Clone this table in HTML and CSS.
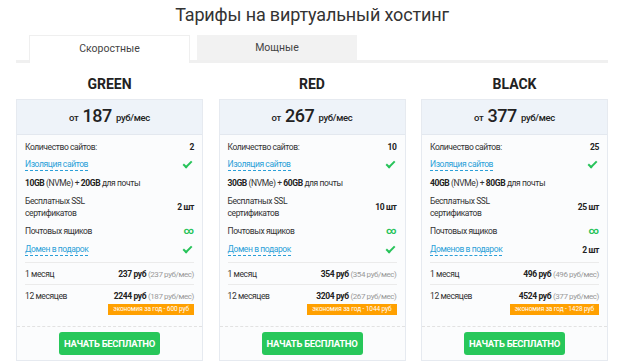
FILE: index.html
```html
<!DOCTYPE html>
<html lang="ru">
<head>
<meta charset="utf-8">
<link rel="stylesheet" href="styles.css">
</head>
<body>
<div class="page">
  <h1 class="title">Тарифы на виртуальный хостинг</h1>
  <div class="tabs">
    <div class="tab active">Скоростные</div>
    <div class="tab">Мощные</div>
  </div>
  <div class="plans">
    <div class="plan">
      <div class="plan-name">GREEN</div>
      <div class="card">
        <div class="card-head">от <span class="big">187</span> руб/мес</div>
        <div class="card-body">
          <div class="row"><span>Количество сайтов:</span><b>2</b></div>
          <div class="row"><span class="link">Изоляция сайтов</span><span class="check"></span></div>
          <div class="row"><span><b>10GB</b> (NVMe) + <b>20GB</b> для почты</span></div>
          <div class="row two"><span>Бесплатных SSL<br>сертификатов</span><b>2 шт</b></div>
          <div class="row"><span>Почтовых ящиков</span><span class="inf">∞</span></div>
          <div class="row gift"><span class="link">Домен в подарок</span><span class="check"></span></div>
          <div class="price-row"><span>1 месяц</span><span><b>237 руб</b> <i>(237 руб/мес)</i></span></div>
          <div class="price-row last"><span>12 месяцев</span><span class="col"><span><b>2244 руб</b> <i>(187 руб/мес)</i></span><span class="badge">экономия за год - 600 руб</span></span></div>
        </div>
        <div class="card-foot"><a class="btn">НАЧАТЬ БЕСПЛАТНО</a></div>
      </div>
    </div>
    <div class="plan">
      <div class="plan-name">RED</div>
      <div class="card">
        <div class="card-head">от <span class="big">267</span> руб/мес</div>
        <div class="card-body">
          <div class="row"><span>Количество сайтов:</span><b>10</b></div>
          <div class="row"><span class="link">Изоляция сайтов</span><span class="check"></span></div>
          <div class="row"><span><b>30GB</b> (NVMe) + <b>60GB</b> для почты</span></div>
          <div class="row two"><span>Бесплатных SSL<br>сертификатов</span><b>10 шт</b></div>
          <div class="row"><span>Почтовых ящиков</span><span class="inf">∞</span></div>
          <div class="row gift"><span class="link">Домен в подарок</span><span class="check"></span></div>
          <div class="price-row"><span>1 месяц</span><span><b>354 руб</b> <i>(354 руб/мес)</i></span></div>
          <div class="price-row last"><span>12 месяцев</span><span class="col"><span><b>3204 руб</b> <i>(267 руб/мес)</i></span><span class="badge">экономия за год - 1044 руб</span></span></div>
        </div>
        <div class="card-foot"><a class="btn">НАЧАТЬ БЕСПЛАТНО</a></div>
      </div>
    </div>
    <div class="plan">
      <div class="plan-name">BLACK</div>
      <div class="card">
        <div class="card-head">от <span class="big">377</span> руб/мес</div>
        <div class="card-body">
          <div class="row"><span>Количество сайтов:</span><b>25</b></div>
          <div class="row"><span class="link">Изоляция сайтов</span><span class="check"></span></div>
          <div class="row"><span><b>40GB</b> (NVMe) + <b>80GB</b> для почты</span></div>
          <div class="row two"><span>Бесплатных SSL<br>сертификатов</span><b>25 шт</b></div>
          <div class="row"><span>Почтовых ящиков</span><span class="inf">∞</span></div>
          <div class="row gift"><span class="link">Доменов в подарок</span><b>2 шт</b></div>
          <div class="price-row"><span>1 месяц</span><span><b>496 руб</b> <i>(496 руб/мес)</i></span></div>
          <div class="price-row last"><span>12 месяцев</span><span class="col"><span><b>4524 руб</b> <i>(377 руб/мес)</i></span><span class="badge">экономия за год - 1428 руб</span></span></div>
        </div>
        <div class="card-foot"><a class="btn">НАЧАТЬ БЕСПЛАТНО</a></div>
      </div>
    </div>
  </div>
</div>
</body>
</html>
```

FILE: styles.css
```css
* { box-sizing: border-box; }
html, body { margin: 0; padding: 0; background: #fff; }
body {
  font-family: Roboto, "Noto Sans", sans-serif;
  color: #333;
  overflow: hidden;
}
.page { width: 592px; margin-left: 16px; }
.title {
  margin: 0;
  padding-top: 4px;
  height: 35px;
  font-size: 18px;
  font-weight: 400;
  letter-spacing: -0.15px;
  text-align: center;
  color: #333;
  line-height: 22px;
}
.tabs {
  display: flex;
  gap: 7px;
  padding-left: 13px;
  border-bottom: 3px solid #f0f0f0;
  height: 28px;
}
.tab {
  width: 160px;
  height: 25px;
  background: #f2f2f2;
  font-size: 10.5px;
  line-height: 25px;
  text-align: center;
  color: #444;
}
.tab.active {
  width: 161px;
  height: 28px;
  background: #fff;
  border: 1px solid #efefef;
  border-bottom: none;
  line-height: 26px;
}
.plans {
  display: grid;
  grid-template-columns: 187px 187px 187px;
  justify-content: space-between;
}
.plan-name {
  text-align: center;
  font-weight: 700;
  font-size: 14px;
  line-height: 20px;
  padding-top: 11px;
  height: 36px;
  color: #222;
}
.card {
  border: 1px solid #e6eaf0;
  background: #fbfcfd;
}
.card-head {
  background: #eef3f9;
  height: 35px;
  border-bottom: 1px solid #e3e8ef;
  display: flex;
  align-items: center;
  justify-content: center;
  gap: 4px;
  font-size: 9.5px;
  font-weight: 500;
  letter-spacing: -0.3px;
  color: #222;
}
.card-head .big { font-size: 18px; font-weight: 500; margin-top: -3px; letter-spacing: -0.4px; }
.card-body { padding: 3px 8px 0 8px; font-size: 8.5px; letter-spacing: -0.4px; }
.row {
  display: flex;
  justify-content: space-between;
  align-items: center;
  height: 18px;
}
.row.two { height: 30px; line-height: 12px; }
.row.gift { height: 20px; }
.row b, .price-row b { font-weight: 700; color: #222; }
.link {
  color: #2a9fd8;
  border-bottom: 1px dashed #2a9fd8;
  line-height: 11px;
}
.check {
  width: 9px; height: 5px;
  border-left: 2.2px solid #27c35a;
  border-bottom: 2.2px solid #27c35a;
  transform: rotate(-45deg);
  margin-right: 2px;
  margin-top: -3px;
}
.inf { color: #27c35a; font-weight: 700; font-size: 10px; line-height: 10px; letter-spacing: 0; }
.price-row {
  display: flex;
  justify-content: space-between;
  align-items: flex-start;
  border-top: 1px solid #ebebeb;
  height: 22px;
  padding-top: 6px;
  margin-top: 2px;
}
.price-row + .price-row { margin-top: 0; }
.price-row.last { height: 42px; padding-top: 6px; }
.price-row i { font-style: normal; color: #999; font-size: 8px; }
.col { display: flex; flex-direction: column; align-items: flex-end; gap: 3px; }
.badge {
  background: #ffa000;
  color: #fff;
  font-size: 6.5px;
  letter-spacing: -0.1px;
  line-height: 11px;
  padding: 0 5px;
}
.card-foot {
  border-top: 1px dashed #e2e2e2;
  display: flex;
  justify-content: center;
  padding: 5px 0 5px;
}
.btn {
  background: #27c75a;
  color: #fff;
  font-weight: 700;
  font-size: 9.5px;
  letter-spacing: -0.3px;
  width: 101px;
  height: 23px;
  line-height: 23px;
  text-align: center;
  border-radius: 3px;
  white-space: nowrap;
}
```
